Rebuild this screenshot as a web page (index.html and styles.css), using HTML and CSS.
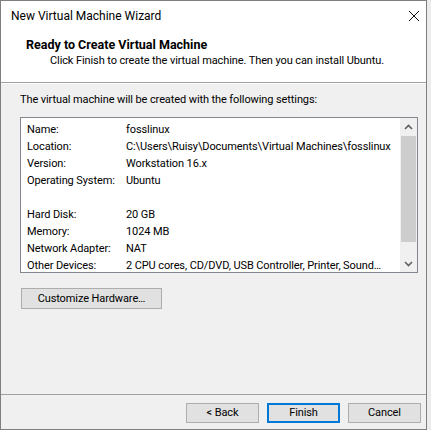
FILE: index.html
```html
<!DOCTYPE html>
<html lang="en">
<head>
<meta charset="utf-8">
<title>New Virtual Machine Wizard</title>
<link rel="stylesheet" href="styles.css">
</head>
<body>
<div class="window">
  <div class="header">
    <div class="titlebar">
      <span class="title">New Virtual Machine Wizard</span>
      <svg class="close" width="12" height="12" viewBox="0 0 12 12"><path d="M1 1 L11 11 M11 1 L1 11" stroke="#111" stroke-width="1" fill="none"/></svg>
    </div>
    <div class="heading">Ready to Create Virtual Machine</div>
    <div class="subheading">Click Finish to create the virtual machine. Then you can install Ubuntu.</div>
  </div>
  <div class="main">
    <div class="intro">The virtual machine will be created with the following settings:</div>
    <div class="listbox">
      <div class="list">
        <div class="row"><span class="label">Name:</span><span class="value">fosslinux</span></div>
        <div class="row"><span class="label">Location:</span><span class="value">C:\Users\Ruisy\Documents\Virtual Machines\fosslinux</span></div>
        <div class="row"><span class="label">Version:</span><span class="value">Workstation 16.x</span></div>
        <div class="row"><span class="label">Operating System:</span><span class="value">Ubuntu</span></div>
        <div class="row"><span class="label"></span><span class="value"></span></div>
        <div class="row"><span class="label">Hard Disk:</span><span class="value">20 GB</span></div>
        <div class="row"><span class="label">Memory:</span><span class="value">1024 MB</span></div>
        <div class="row"><span class="label">Network Adapter:</span><span class="value">NAT</span></div>
        <div class="row"><span class="label">Other Devices:</span><span class="value">2 CPU cores, CD/DVD, USB Controller, Printer, Sound…</span></div>
      </div>
      <div class="scrollbar">
        <div class="arrow"><svg width="9" height="6" viewBox="0 0 9 6"><path d="M1 5 L4.5 1.5 L8 5" stroke="#606060" stroke-width="1.6" fill="none"/></svg></div>
        <div class="track"><div class="thumb"></div></div>
        <div class="arrow"><svg width="9" height="6" viewBox="0 0 9 6"><path d="M1 1 L4.5 4.5 L8 1" stroke="#606060" stroke-width="1.6" fill="none"/></svg></div>
      </div>
    </div>
    <button class="btn customize" type="button">Customize Hardware…</button>
  </div>
  <div class="footer">
    <button class="btn" type="button">&lt; Back</button>
    <button class="btn primary" type="button">Finish</button>
    <button class="btn" type="button">Cancel</button>
  </div>
</div>
</body>
</html>
```
FILE: styles.css
```css
* { box-sizing: border-box; }
html, body { margin: 0; padding: 0; }
body {
  background: #ececec;
  width: 431px;
  height: 430px;
  overflow: hidden;
  font-family: Roboto, "Liberation Sans", sans-serif;
  font-size: 11px;
  letter-spacing: -0.1px;
  color: #000;
}
.window {
  width: 427px;
  height: 430px;
  border: 1px solid #7f7f7f;
  background: #f0f0f0;
  display: flex;
  flex-direction: column;
}
.header {
  background: #fff;
  height: 81px;
  flex: none;
  border-bottom: 1px solid #a0a0a0;
  box-shadow: 0 1px 0 #fff;
  box-sizing: content-box;
}
.titlebar {
  height: 30px;
  display: flex;
  align-items: center;
  justify-content: space-between;
  padding: 0 6px 0 10px;
}
.title {
  font-size: 12px;
  letter-spacing: 0;
  line-height: 16px;
}
.close { display: block; margin-top: -1px; }
.heading {
  margin-top: 6px;
  padding-left: 25px;
  font-size: 12.5px;
  font-weight: 700;
  letter-spacing: 0;
  line-height: 16px;
}
.subheading {
  padding-left: 49px;
  line-height: 16px;
}
.main {
  flex: 1;
  padding: 9px 0 0 19px;
  display: flex;
  flex-direction: column;
  align-items: flex-start;
}
.intro {
  line-height: 16px;
  padding-left: 0;
}
.listbox {
  margin-top: 9px;
  width: 398px;
  height: 156px;
  border: 1px solid #828790;
  background: #fff;
  display: flex;
  overflow: hidden;
}
.list {
  flex: 1;
  padding: 3px 0 0 6px;
  overflow: hidden;
}
.row {
  display: grid;
  grid-template-columns: 99px 1fr;
  height: 17px;
  line-height: 17px;
  white-space: nowrap;
}
.scrollbar {
  width: 17px;
  flex: none;
  background: #f0f0f0;
  display: flex;
  flex-direction: column;
}
.arrow {
  height: 17px;
  flex: none;
  display: flex;
  align-items: center;
  justify-content: center;
}
.track {
  flex: 1;
  padding: 1px 1px 0 1px;
}
.thumb {
  height: 106px;
  background: #cdcdcd;
}
.btn {
  font-family: inherit;
  font-size: 11px;
  letter-spacing: -0.1px;
  color: #000;
  background: #e1e1e1;
  border: 1px solid #adadad;
  padding: 0;
  margin: 0;
  line-height: 16px;
}
.customize {
  margin-top: 15px;
  margin-left: 1px;
  width: 141px;
  height: 21px;
}
.footer {
  flex: none;
  height: 35px;
  border-top: 1px solid #a0a0a0;
  display: flex;
  justify-content: flex-end;
  align-items: flex-start;
  gap: 8px;
  padding: 8px 5px 0 0;
}
.footer .btn {
  width: 73px;
  height: 20px;
}
.primary {
  border: 2px solid #0078d7;
}
```
